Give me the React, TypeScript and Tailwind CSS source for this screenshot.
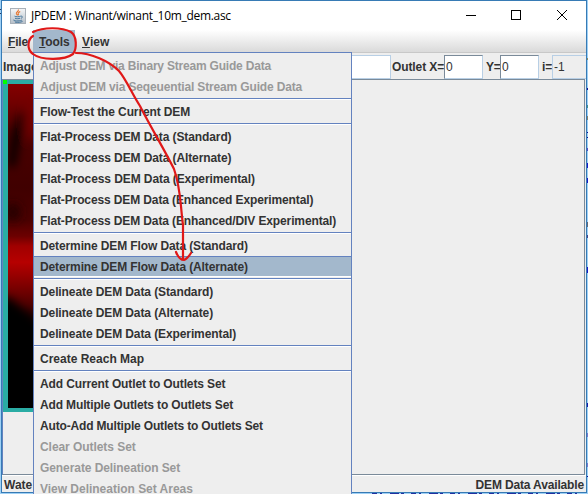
import React from 'react';

type Entry = { label: string; spacing: string; disabled?: boolean; active?: boolean };

const groups: Entry[][] = [
  [
    { label: 'Adjust DEM via Binary Stream Guide Data', spacing: 'tracking-[-0.2px]', disabled: true },
    { label: 'Adjust DEM via Seqeuential Stream Guide Data', spacing: 'tracking-[-0.15px]', disabled: true },
  ],
  [{ label: 'Flow-Test the Current DEM', spacing: 'tracking-[-0.12px]' }],
  [
    { label: 'Flat-Process DEM Data (Standard)', spacing: 'tracking-[-0.1px]' },
    { label: 'Flat-Process DEM Data (Alternate)', spacing: 'tracking-[-0.1px]' },
    { label: 'Flat-Process DEM Data (Experimental)', spacing: 'tracking-[-0.09px]' },
    { label: 'Flat-Process DEM Data (Enhanced Experimental)', spacing: 'tracking-[-0.12px]' },
    { label: 'Flat-Process DEM Data (Enhanced/DIV Experimental)', spacing: 'tracking-[-0.12px]' },
  ],
  [
    { label: 'Determine DEM Flow Data (Standard)', spacing: 'tracking-[-0.12px]' },
    { label: 'Determine DEM Flow Data (Alternate)', spacing: 'tracking-[-0.12px]', active: true },
  ],
  [
    { label: 'Delineate DEM Data (Standard)', spacing: 'tracking-[-0.1px]' },
    { label: 'Delineate DEM Data (Alternate)', spacing: 'tracking-[-0.1px]' },
    { label: 'Delineate DEM Data (Experimental)', spacing: 'tracking-[-0.1px]' },
  ],
  [{ label: 'Create Reach Map', spacing: 'tracking-normal' }],
  [
    { label: 'Add Current Outlet to Outlets Set', spacing: 'tracking-[-0.12px]' },
    { label: 'Add Multiple Outlets to Outlets Set', spacing: 'tracking-[-0.14px]' },
    { label: 'Auto-Add Multiple Outlets to Outlets Set', spacing: 'tracking-[-0.16px]' },
    { label: 'Clear Outlets Set', spacing: 'tracking-[-0.06px]', disabled: true },
    { label: 'Generate Delineation Set', spacing: 'tracking-[-0.08px]', disabled: true },
    { label: 'View Delineation Set Areas', spacing: 'tracking-[-0.02px]', disabled: true },
  ],
];

function JavaIcon() {
  return (
    <svg width="16" height="16" viewBox="0 0 16 16" className="ml-[2px] shrink-0">
      <defs>
        <linearGradient id="tile" x1="0" y1="0" x2="0" y2="1">
          <stop offset="0" stopColor="#f6f7f8" />
          <stop offset="1" stopColor="#b4bec8" />
        </linearGradient>
      </defs>
      <rect x=".5" y=".5" width="15" height="15" fill="url(#tile)" stroke="#a9b1b9" />
      <path d="M8.3 1.5C9.3 3.2 5.5 4.2 6.4 5.8L7.6 7.4M10.2 3.6C8 4.6 7.6 5.4 8.7 7.2" fill="none" stroke="#e8742c" strokeWidth="1.1" />
      <path d="M4.6 8.2C5.5 9 9.4 8.9 10.7 8.2M5 10.2C6.4 10.9 8.8 10.8 10 10.2M10.8 8.2C13 7.8 12.8 9.8 10.8 10.4M3.8 11.8C2.5 13.3 10.5 13.3 12 12M5 14.1C8 14.6 11 14.4 12.6 13.3" fill="none" stroke="#45759b" />
    </svg>
  );
}

function TitleBar() {
  return (
    <header className="flex h-[29px] shrink-0 items-center bg-white pl-[6px]">
      <JavaIcon />
      <span className="ml-[5px] grow whitespace-nowrap font-['Open_Sans','Noto_Sans',sans-serif] text-[12px] font-normal tracking-[-0.31px] text-black">
        JPDEM : Winant/winant_10m_dem.asc
      </span>
      <svg width="120" height="28" viewBox="0 0 120 28" className="shrink-0" fill="none" stroke="#000" shapeRendering="crispEdges">
        <path d="M0 13.5H10" />
        <rect x="45.5" y="8.5" width="9" height="9" />
        <path d="M91 8L101 18M101 8L91 18" shapeRendering="auto" />
      </svg>
    </header>
  );
}

function MenuBar() {
  return (
    <nav className="flex h-[22px] shrink-0 bg-linear-to-b from-white to-[#dadada] leading-[24px]">
      <span className="w-[31px] pl-[6px] tracking-[-0.2px]"><u>F</u>ile</span>
      <span className="w-[42px] bg-[#a3b8cc] pl-[6px] tracking-[-0.1px]"><u>T</u>ools</span>
      <span className="pl-[7px] tracking-[0.1px]"><u>V</u>iew</span>
    </nav>
  );
}

function Field({ value }: { value: string }) {
  return (
    <span className="h-6 w-[39px] border border-t-[#7a8a99] border-l-[#7a8a99] border-r-[#b8cfe5] border-b-[#b8cfe5] bg-white pl-[1px] leading-[23px] font-normal">
      {value}
    </span>
  );
}

function ToolBar() {
  return (
    <div className="flex h-[27px] shrink-0 border-t border-[#c8c8c8] pt-[2px] leading-[24px]">
      <span className="w-[44px] pl-px">Image</span>
      <span className="h-6 w-[345px] border border-[#b8cfe5] bg-white" />
      <span className="w-[53px] pl-px tracking-[-0.1px] whitespace-nowrap">Outlet X=</span>
      <Field value="0" />
      <span className="w-[17px] pl-[3px] tracking-[-0.3px]">Y=</span>
      <Field value="0" />
      <span className="w-[13px] pl-[3px]">i=</span>
      <span className="h-6 grow border border-r-0 border-[#b8cfe5] pl-[1px] leading-[23px] font-normal">-1</span>
    </div>
  );
}

function Terrain() {
  return (
    <div className="h-[332px] w-[345px] border-4 border-r-0 border-l-[5px] border-[#2aaca4] bg-black">
      <svg width="340" height="324" viewBox="0 0 340 324">
        <defs>
          <linearGradient id="relief" gradientUnits="userSpaceOnUse" x1="0" y1="0" x2="0" y2="324">
            <stop offset="0" stopColor="#840000" />
            <stop offset=".06" stopColor="#700000" />
            <stop offset=".14" stopColor="#4c0000" />
            <stop offset=".32" stopColor="#400000" />
            <stop offset=".42" stopColor="#4a0000" />
            <stop offset=".47" stopColor="#6c0000" />
            <stop offset=".5" stopColor="#a00000" />
            <stop offset=".55" stopColor="#b60000" />
            <stop offset=".6" stopColor="#900000" />
            <stop offset=".68" stopColor="#500000" />
            <stop offset=".75" stopColor="#000" />
          </linearGradient>
          <filter id="soft" x="-1" y="-1" width="3" height="3"><feGaussianBlur stdDeviation="5" /></filter>
        </defs>
        <rect width="340" height="324" fill="url(#relief)" />
        <g filter="url(#soft)">
          <path d="M13 28L4 52L0 82L7 83L12 55L18 30Z" fill="#000" />
          <ellipse cx="23" cy="36" rx="5" ry="22" fill="#780000" />
          <ellipse cx="5" cy="128" rx="8" ry="9" fill="#260000" />
          <path d="M-20 213L2 214L26 235V340H-20Z" fill="#000" />
        </g>
      </svg>
    </div>
  );
}

function ToolsMenu() {
  return (
    <div className="absolute top-[52px] left-[33px] h-[460px] w-[319px] border border-[#6382bf] bg-[#eee] pt-[2px]">
      {groups.map((group, g) => (
        <div key={g}>
          {g > 0 && <div className="h-1 pt-px"><div className="h-[2px] border-t border-[#6382bf] bg-white" /></div>}
          {group.map((item) => (
            <div
              key={item.label}
              className={`h-[21px] pl-[6px] whitespace-nowrap ${item.spacing} ${item.disabled ? 'text-[#999]' : ''} ${item.active ? 'border-t border-b border-t-[#6382bf] border-b-white bg-[#a3b8cc] leading-[21px]' : 'leading-[23px]'}`}
            >
              {item.label}
            </div>
          ))}
        </div>
      ))}
    </div>
  );
}

function Annotation() {
  return (
    <svg className="absolute inset-0" width="588" height="494" viewBox="0 0 588 494" fill="none" stroke="#e01818" strokeWidth="2.2" strokeLinecap="round" strokeLinejoin="round">
      <path d="M33 32C43 27 62 27 71 32C77 36 77 49 73 54C65 60 42 61 33 54C26 49 28 39 33 36" />
      <path d="M76 53C91 53 109 61 119 71C126 79 132 94 140 106C149 124 164 149 174 169C181 189 180 203 183 225V259" />
      <path d="M176 252C178 257 181 260 184 260C187 259 189 256 191 253" />
    </svg>
  );
}

const edgeMarks = [
  [58, 2, '#8b8b62'], [88, 2, '#10109a'], [105, 3, '#428e8e'], [116, 4, '#808070'],
  [132, 1, '#10109a'], [137, 1, '#10109a'], [148, 3, '#5548c8'], [163, 5, '#1818c8'],
  [178, 5, '#1818c8'], [222, 5, '#606878'], [235, 3, '#44448a'], [267, 6, '#1818c8'],
  [403, 4, '#1818a8'], [433, 4, '#7777cc'], [463, 4, '#7777cc'], [476, 1, '#10109a'],
] as const;

function Backdrop() {
  return (
    <svg className="absolute inset-0" width="588" height="494" shapeRendering="crispEdges">
      <rect width="588" height="494" fill="#9fd0f5" />
      <path d="M0 9.5h1M0 13.5h1" stroke="#273b64" />
      {edgeMarks.map(([y, h, color]) => <rect key={y} x="587" y={y} width="1" height={h} fill={color} />)}
      <path d="M372 493.5H580" stroke="#2030a0" strokeDasharray="5 3 2 8 9 2 3 7" />
    </svg>
  );
}

export default function App() {
  return (
    <main className="relative h-[494px] w-[588px] overflow-hidden font-['Liberation_Sans',Arial,sans-serif] text-[12px] font-bold text-[#333]">
      <Backdrop />
      <section className="relative ml-px flex h-[493px] w-[586px] flex-col border border-[#377bb5] bg-[#eee]">
        <TitleBar />
        <MenuBar />
        <ToolBar />
        <div className="mr-px h-[396px] shrink-0 border border-[#7a8a99] border-l-[#6382bf]">
          <Terrain />
        </div>
        <footer className="flex grow items-center justify-between border-t border-white pt-[2px] pr-[2px] pl-[2px] leading-[15px]">
          <span>Wate</span>
          <span className="tracking-[-0.15px]">DEM Data Available</span>
        </footer>
        <span className="absolute top-[79px] left-px h-1 w-1 bg-[#0f0]" />
      </section>
      <ToolsMenu />
      <Annotation />
    </main>
  );
}
